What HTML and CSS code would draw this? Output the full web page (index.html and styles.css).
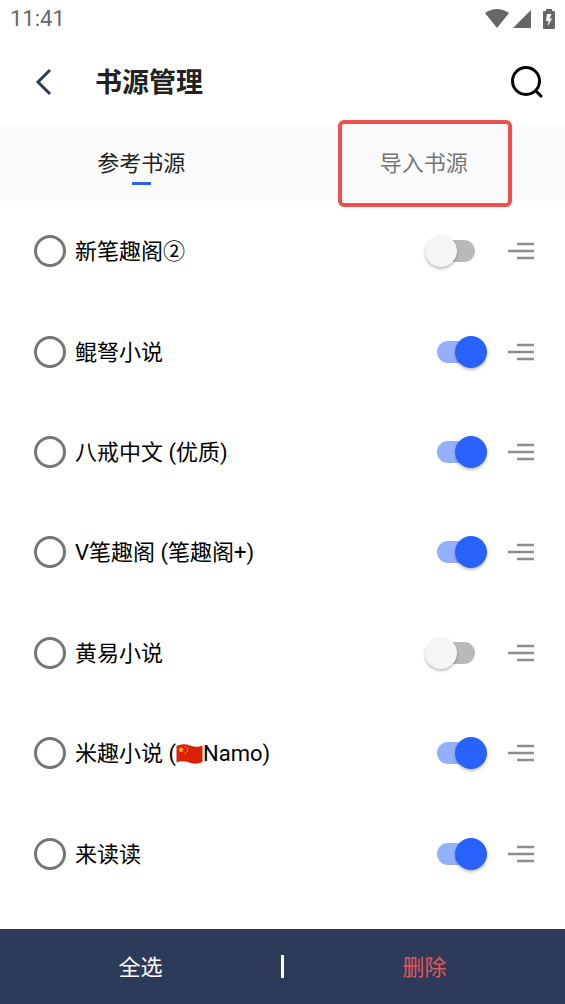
FILE: index.html
```html
<!DOCTYPE html>
<html lang="zh-CN">
<head>
<meta charset="utf-8">
<meta name="viewport" content="width=device-width, initial-scale=1">
<title>书源管理</title>
<link rel="stylesheet" href="styles.css">
</head>
<body>
<div class="page">
  <div class="status">
    <span>11:41</span>
    <div class="status-icons">
      <svg width="24" height="20" viewBox="0 0 24 20"><path d="M0 4Q12-4 24 4L12 19Z"/></svg>
      <svg width="18" height="20" viewBox="0 0 18 20"><path d="M0 19L18 1V19Z"/></svg>
      <svg class="battery" width="12" height="20" viewBox="0 0 12 20"><path fill-rule="evenodd" d="M3 0H9V2H11Q12 2 12 3V19Q12 20 11 20H1Q0 20 0 19V3Q0 2 1 2H3ZM4 5L3 12H5.500L5 17L9 9.500H6.500L8.500 5Z"/></svg>
    </div>
  </div>
  <header class="header">
    <button class="icon-button back" aria-label="返回"><svg width="18" height="28" viewBox="0 0 18 28"><path d="M15 2L3 14L15 26"/></svg></button>
    <h1 class="title">书源管理</h1>
    <button class="icon-button search" aria-label="搜索"><svg width="34" height="34" viewBox="0 0 34 34"><circle cx="16" cy="16" r="13.500"/><path d="M26 26L31 31"/></svg></button>
  </header>
  <nav class="tabs">
    <button class="tab active">参考书源</button>
    <button class="tab marked">导入书源</button>
  </nav>
  <ul class="list">
    <li class="row"><label class="source"><input class="pick" type="checkbox"><span class="name">新笔趣阁②</span></label><input class="switch" type="checkbox" aria-label="启用新笔趣阁②"><button class="icon-button drag" aria-label="排序"><svg width="26" height="20" viewBox="0 0 26 20"><path d="M9 3H26M0 10H26M9 17H26"/></svg></button></li>
    <li class="row"><label class="source"><input class="pick" type="checkbox"><span class="name">鲲弩小说</span></label><input class="switch" type="checkbox" checked aria-label="启用鲲弩小说"><button class="icon-button drag" aria-label="排序"><svg width="26" height="20" viewBox="0 0 26 20"><path d="M9 3H26M0 10H26M9 17H26"/></svg></button></li>
    <li class="row"><label class="source"><input class="pick" type="checkbox"><span class="name">八戒中文 (优质)</span></label><input class="switch" type="checkbox" checked aria-label="启用八戒中文"><button class="icon-button drag" aria-label="排序"><svg width="26" height="20" viewBox="0 0 26 20"><path d="M9 3H26M0 10H26M9 17H26"/></svg></button></li>
    <li class="row"><label class="source"><input class="pick" type="checkbox"><span class="name">V笔趣阁 (笔趣阁+)</span></label><input class="switch" type="checkbox" checked aria-label="启用V笔趣阁"><button class="icon-button drag" aria-label="排序"><svg width="26" height="20" viewBox="0 0 26 20"><path d="M9 3H26M0 10H26M9 17H26"/></svg></button></li>
    <li class="row"><label class="source"><input class="pick" type="checkbox"><span class="name">黄易小说</span></label><input class="switch" type="checkbox" aria-label="启用黄易小说"><button class="icon-button drag" aria-label="排序"><svg width="26" height="20" viewBox="0 0 26 20"><path d="M9 3H26M0 10H26M9 17H26"/></svg></button></li>
    <li class="row"><label class="source"><input class="pick" type="checkbox"><span class="name">米趣小说 (<svg class="flag" width="27" height="20" viewBox="0 0 27 20"><path fill="#dc2008" d="M0.500 2Q7-1 14 1.500T26.500 1.500V18Q20 21 13 18.500T0.500 18.500Z"/><path fill="#ffd323" d="M5 2.500L5.800 4.700L8 4.800L6.300 6.200L6.900 8.400L5 7.200L3.100 8.400L3.700 6.200L2 4.800L4.200 4.700Z"/><g fill="#f5a818"><circle cx="9.500" cy="2.500" r=".8"/><circle cx="11.500" cy="4.500" r=".8"/><circle cx="11.500" cy="7" r=".8"/><circle cx="9.500" cy="9" r=".8"/></g></svg>Namo)</span></label><input class="switch" type="checkbox" checked aria-label="启用米趣小说"><button class="icon-button drag" aria-label="排序"><svg width="26" height="20" viewBox="0 0 26 20"><path d="M9 3H26M0 10H26M9 17H26"/></svg></button></li>
    <li class="row"><label class="source"><input class="pick" type="checkbox"><span class="name">来读读</span></label><input class="switch" type="checkbox" checked aria-label="启用来读读"><button class="icon-button drag" aria-label="排序"><svg width="26" height="20" viewBox="0 0 26 20"><path d="M9 3H26M0 10H26M9 17H26"/></svg></button></li>
  </ul>
  <footer class="actions">
    <button class="action">全选</button>
    <span class="divider"></span>
    <button class="action danger">删除</button>
  </footer>
</div>
</body>
</html>
```
FILE: styles.css
```css
* { box-sizing: border-box; }
body {
  margin: 0;
  background: #fff;
  color: #000;
  font: 22px/32px Roboto, "Noto Sans CJK SC", sans-serif;
}
button {
  padding: 0;
  border: 0;
  background: none;
  color: inherit;
  font: inherit;
}
svg { display: block; }
.page {
  display: flex;
  flex-direction: column;
  min-height: 100vh;
}
.status {
  display: flex;
  justify-content: space-between;
  align-items: center;
  height: 38px;
  padding: 0 10px;
  color: #666;
}
.status-icons {
  display: flex;
  align-items: center;
  gap: 4px;
  fill: #666;
}
.battery { margin: 0 0 0 8px; }
.header {
  display: flex;
  align-items: center;
  height: 87px;
  padding: 0 21px 0 35px;
}
.icon-button svg {
  fill: none;
  stroke: currentColor;
}
.back { color: #2e3b5b; }
.back svg { stroke-width: 3; }
.title {
  flex: 1;
  margin: 0 0 0 42px;
  padding: 2px 0 0;
  color: #222;
  font-size: 27px;
  font-weight: 700;
}
.search svg {
  stroke-width: 3;
  stroke-linecap: round;
}
.tabs {
  display: flex;
  height: 76px;
  background: #fafafa;
}
.tab {
  position: relative;
  flex: 1;
  padding: 2px 0 0;
  color: #757575;
}
.active { color: #222; }
.active::after {
  content: "";
  position: absolute;
  bottom: 16px;
  left: 50%;
  width: 19px;
  height: 3px;
  margin-left: -9px;
  background: #2c62ee;
}
.marked::after {
  content: "";
  position: absolute;
  inset: -5px 53px -6px 55px;
  border: 4px solid #ed504d;
  border-radius: 6px;
}
.list {
  display: flex;
  flex: 1;
  flex-direction: column;
  margin: 0;
  padding: 0 31px 25px 34px;
  list-style: none;
}
.row {
  display: flex;
  flex: 1;
  align-items: center;
}
.source {
  display: flex;
  flex: 1;
  align-items: center;
  gap: 9px;
}
.name { padding: 2px 0 0; }
.pick {
  appearance: none;
  width: 32px;
  height: 32px;
  margin: 0;
  border: 3px solid #757575;
  border-radius: 50%;
}
.pick:checked { background: #2962fa; }
.flag {
  display: inline-block;
  vertical-align: -3px;
}
.switch {
  appearance: none;
  position: relative;
  width: 62px;
  height: 32px;
  margin: 0 21px 0 0;
}
.switch::before {
  content: "";
  position: absolute;
  top: 5px;
  left: 6px;
  width: 44px;
  height: 22px;
  border-radius: 11px;
  background: #b9b9b9;
}
.switch::after {
  content: "";
  position: absolute;
  top: 0;
  left: 0;
  width: 32px;
  height: 32px;
  border-radius: 50%;
  background: #f5f5f5;
  box-shadow: 0 2px 3px rgba(0, 0, 0, 0.25);
}
.switch:checked::before {
  left: 12px;
  background: #94b0fc;
}
.switch:checked::after {
  left: 30px;
  background: #2962fa;
}
.drag { color: #8d8b95; }
.drag svg { stroke-width: 2.5; }
.actions {
  display: flex;
  align-items: center;
  height: 75px;
  background: #2e3a59;
  color: #fff;
}
.action {
  flex: 1;
  height: 100%;
  padding: 2px 0 0;
}
.divider {
  width: 3px;
  height: 23px;
  background: #fff;
}
.danger { color: #e45656; }
```
